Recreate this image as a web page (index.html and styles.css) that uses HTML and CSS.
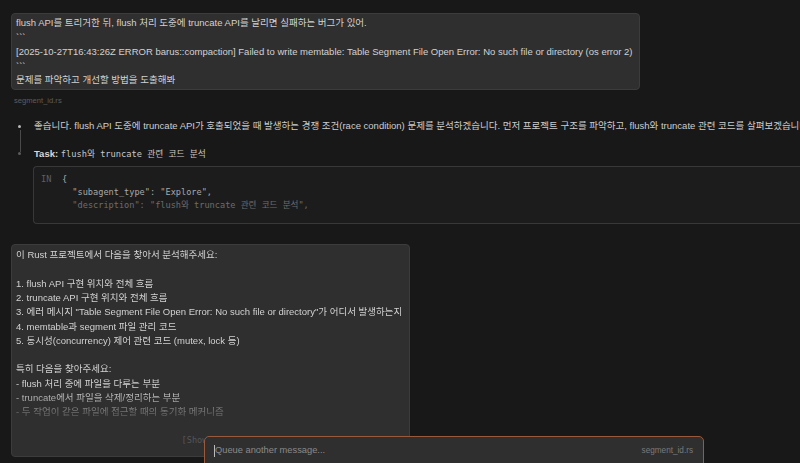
FILE: index.html
```html
<!DOCTYPE html>
<html lang="ko">
<head>
    <meta charset="UTF-8">
    <meta name="viewport" content="width=device-width, initial-scale=1.0">
    <title>Chat</title>
    <link rel="stylesheet" href="styles.css">
</head>
<body>
    <div class="chat">
        <div class="user-msg">
            <div class="msg-text">flush API를 트리거한 뒤, flush 처리 도중에 truncate API를 날리면 실패하는 버그가 있어.
&#96;&#96;&#96;
[2025-10-27T16:43:26Z ERROR barus::compaction] Failed to write memtable: Table Segment File Open Error: No such file or directory (os error 2)
&#96;&#96;&#96;
문제를 파악하고 개선할 방법을 도출해봐</div>
        </div>
        <div class="file-tag">segment_id.rs</div>

        <div class="assistant">
            <div class="step">
                <span class="dot"></span>
                <div class="step-text">좋습니다. flush API 도중에 truncate API가 호출되었을 때 발생하는 경쟁 조건(race condition) 문제를 분석하겠습니다. 먼저 프로젝트 구조를 파악하고, flush와 truncate 관련 코드를 살펴보겠습니다.</div>
            </div>
            <div class="step tool">
                <span class="dot dim"></span>
                <div class="step-text"><b>Task:</b> <code>flush와 truncate 관련 코드 분석</code></div>
            </div>
            <div class="code-box">
                <span class="code-label">IN</span>
                <pre class="code-body">{
  "subagent_type": "Explore",
  <span class="faded">"description": "flush와 truncate 관련 코드 분석",</span></pre>
            </div>
        </div>

        <div class="user-msg prompt">
            <div class="msg-text fade-out">이 Rust 프로젝트에서 다음을 찾아서 분석해주세요:

1. flush API 구현 위치와 전체 흐름
2. truncate API 구현 위치와 전체 흐름
3. 에러 메시지 "Table Segment File Open Error: No such file or directory"가 어디서 발생하는지
4. memtable과 segment 파일 관리 코드
5. 동시성(concurrency) 제어 관련 코드 (mutex, lock 등)

특히 다음을 찾아주세요:
- flush 처리 중에 파일을 다루는 부분
- truncate에서 파일을 삭제/정리하는 부분
- 두 작업이 같은 파일에 접근할 때의 동기화 메커니즘</div>
            <div class="show-more">[Show more]</div>
        </div>
    </div>

    <div class="composer">
        <span class="caret"></span>
        <span class="placeholder">Queue another message...</span>
        <span class="composer-file">segment_id.rs</span>
    </div>
</body>
</html>
```

FILE: styles.css
```css
body {
    margin: 0;
    background: #181818;
    color: #d2d2d2;
    font-family: 'Liberation Sans', Arial, 'Noto Sans CJK KR', sans-serif;
    font-size: 9.5px;
    line-height: 14.3px;
    overflow: hidden;
    height: 463px;
}

.chat {
    padding: 13px 0 0 11px;
}

.user-msg {
    width: 618px;
    background: #2f2f2f;
    border: 1px solid #3c3c3c;
    border-radius: 4px;
    padding: 2px 5px 2px 4px;
}

.msg-text {
    white-space: pre-wrap;
}

.file-tag {
    margin: 6px 0 0 3px;
    font-size: 7.6px;
    line-height: 10px;
    color: #5d5d5d;
}

.assistant {
    margin-top: 13px;
    white-space: nowrap;
}

.step {
    display: flex;
    align-items: center;
    position: relative;
}

.step + .step {
    margin-top: 13px;
}

.step:first-child::after {
    content: "";
    position: absolute;
    left: 9px;
    top: 11px;
    width: 1px;
    height: 22px;
    background: #4a4a4a;
}

.dot {
    width: 3px;
    height: 3px;
    border-radius: 50%;
    background: #b8b8b8;
    margin: 0 13px 0 7px;
    flex-shrink: 0;
}

.dot.dim {
    background: #5c5c5c;
}

.step-text {
    color: #cdcdcd;
}

.step-text b {
    color: #d8d8d8;
}

.step-text code {
    font-family: 'DejaVu Sans Mono', 'Noto Sans CJK KR', monospace;
    font-size: 8.7px;
    color: #c8c8c8;
}

.code-box {
    margin: 5px 0 0 22px;
    height: 58px;
    display: flex;
    background: #1c1c1c;
    border: 1px solid #383838;
    border-right: none;
    border-radius: 4px 0 0 4px;
    padding: 6px 7px;
    box-sizing: border-box;
    overflow: hidden;
    font-family: 'DejaVu Sans Mono', 'Noto Sans CJK KR', monospace;
    font-size: 8.6px;
    line-height: 13px;
}

.code-label {
    width: 21px;
    color: #5f5f5f;
    flex-shrink: 0;
}

.code-body {
    margin: 0;
    font: inherit;
    color: #a9a9a9;
}

.faded {
    color: #6c6c6c;
}

.prompt {
    margin-top: 20px;
    width: 388px;
    height: 206px;
    padding-top: 3px;
    overflow: hidden;
}

.fade-out {
    height: 172px;
    -webkit-mask-image: linear-gradient(to bottom, #000 0, #000 142px, rgba(0,0,0,0.35) 165px, transparent 180px);
    mask-image: linear-gradient(to bottom, #000 0, #000 142px, rgba(0,0,0,0.35) 165px, transparent 180px);
}

.show-more {
    margin-top: 13px;
    text-align: center;
    font-family: 'DejaVu Sans Mono', monospace;
    font-size: 8.6px;
    color: #565656;
}

.composer {
    position: absolute;
    left: 204px;
    top: 436px;
    width: 500px;
    height: 40px;
    box-sizing: border-box;
    background: #2f2f2f;
    border: 1px solid #9a583c;
    border-radius: 5px;
    padding: 7px 10px 0 9px;
    display: flex;
    align-items: flex-start;
    line-height: 13px;
}

.caret {
    width: 1px;
    height: 12px;
    background: #bbb;
    margin-top: 1px;
}

.placeholder {
    font-size: 9.3px;
    color: #8a8a8a;
    flex: 1;
}

.composer-file {
    font-size: 8.2px;
    color: #7a7a7a;
}
```
